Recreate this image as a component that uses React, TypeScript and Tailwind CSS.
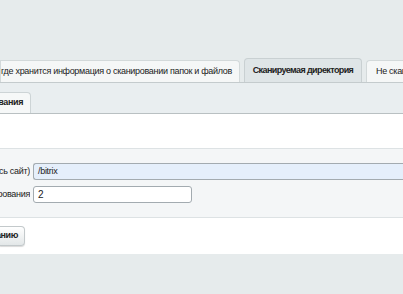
import React from "react";

const font = { fontFamily: '"Liberation Sans", Arial, sans-serif' };

export default function App() {
  return (
    <div className="w-[403px] h-[294px] overflow-hidden bg-[#e6ebec] text-[#222]" style={font}>
      <div className="h-[58px]" />
      {/* top tabs */}
      <div className="flex items-end h-[24px] gap-[4px] whitespace-nowrap">
        <div className="w-[240px] h-[22px] flex justify-end items-center overflow-hidden bg-[#f5f7f7] border border-b-0 border-[#d3d9da] rounded-tr-[4px] pr-[7px] text-[9px] tracking-[-0.3px]">
          <span>Таблица, где хранится информация о сканировании папок и файлов</span>
        </div>
        <div className="w-[118px] h-[24px] flex items-center justify-center bg-[#dfe5e7] border border-b-0 border-[#c9d0d2] rounded-t-[4px] text-[9px] font-bold tracking-[-0.6px]">
          Сканируемая директория
        </div>
        <div className="flex-1 h-[22px] flex items-center pl-[9px] bg-[#f5f7f7] border border-r-0 border-b-0 border-[#d3d9da] rounded-tl-[4px] text-[9px] tracking-[-0.3px] overflow-hidden">
          Не сканируемые директории
        </div>
      </div>
      {/* sub tabs strip */}
      <div className="h-[32px] bg-[#e9eef0] border-t border-[#c4cbcd] border-b border-b-[#b9c0c2] flex items-end">
        <div className="w-[31px] h-[21px] flex justify-end items-center overflow-hidden bg-[#f6f8f8] border border-l-0 border-b-0 border-[#cdd4d6] rounded-tr-[4px] pr-[7px] text-[9px] font-bold tracking-[-0.4px] whitespace-nowrap">
          <span>Параметры сканирования</span>
        </div>
      </div>
      {/* content */}
      <div className="bg-white h-[140px] flex flex-col">
        <div className="h-[34px]" />
        <div className="h-[70px] bg-[#f4f6f7] border-t border-b border-[#dde2e4] flex flex-col pt-[14px] gap-[6px]">
          <div className="flex items-center h-[17px] whitespace-nowrap">
            <div className="w-[30px] flex justify-end overflow-hidden text-[9px] tracking-[-0.3px]">
              <span>Сканируемая директория (пусто - весь сайт)</span>
            </div>
            <div className="ml-[3px] flex-1 h-[17px] bg-[#e5effb] border border-[#a3abb0] border-r-0 rounded-l-[3px] pl-[4px] flex items-center text-[9px] tracking-[-0.3px]">
              /bitrix
            </div>
          </div>
          <div className="flex items-center h-[17px] whitespace-nowrap">
            <div className="w-[30px] flex justify-end overflow-hidden text-[9px] tracking-[-0.3px]">
              <span>Глубина сканирования</span>
            </div>
            <div className="ml-[3px] w-[159px] h-[17px] bg-white border border-[#a3abb0] rounded-[3px] pl-[4px] flex items-center text-[10px]">
              2
            </div>
          </div>
        </div>
        <div className="flex pt-[8px]">
          <div className="w-[25px] h-[20px] flex justify-end items-center overflow-hidden whitespace-nowrap bg-gradient-to-b from-white to-[#e3e7e8] border border-l-0 border-[#c3c9cb] rounded-r-[4px] shadow-[0_1px_1px_rgba(0,0,0,0.15)] pr-[6px] text-[9px] font-bold tracking-[-0.4px]">
            <span>Вернуться к сканированию</span>
          </div>
        </div>
      </div>
    </div>
  );
}
